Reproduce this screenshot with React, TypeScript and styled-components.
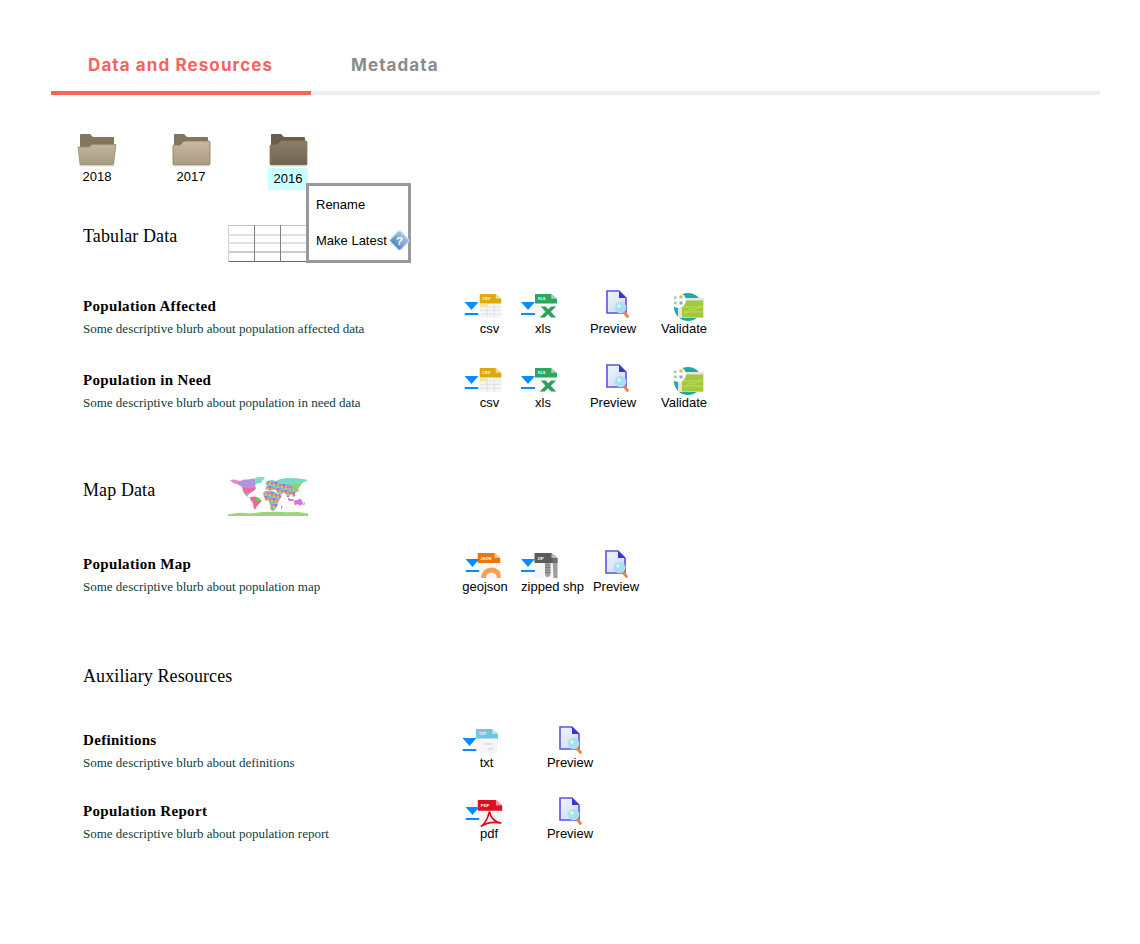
import React from 'react';
import styled, { createGlobalStyle } from 'styled-components';

const GlobalStyle = createGlobalStyle`
  html, body {
    margin: 0;
    background: #fff;
    font-family: "Liberation Sans", Arial, sans-serif;
  }
`;

type FileKind = 'csv' | 'xls' | 'json' | 'zip' | 'txt' | 'pdf';

function FolderIcon({ tone }: { tone: 'open' | 'light' | 'dark' }) {
  const front = { open: '#c2b6a2', light: '#c6b9a2', dark: '#8b7f6c' }[tone];
  const frontEnd = { open: '#a89a82', light: '#ab9c83', dark: '#6f6350' }[tone];
  const id = `folder-${tone}`;
  return (
    <svg width="40" height="34" viewBox="0 0 40 34">
      <defs>
        <linearGradient id={id} x1="0" y1="0" x2="0" y2="1">
          <stop offset="0" stopColor={front} />
          <stop offset="1" stopColor={frontEnd} />
        </linearGradient>
      </defs>
      <path d="M3 2 Q3 1 4 1 H13 L16 4 H36 Q37 4 37 5 V30 H3 Z" fill={tone === 'dark' ? '#6b5d49' : '#84755f'} />
      {tone === 'open' ? (
        <path d="M1 14 H12 L15 11.5 H39 L36.5 31 Q36.5 32 35 32 H4 Q3 32 3 31 Z" fill={`url(#${id})`} stroke="#9c8a6c" strokeWidth="0.8" />
      ) : (
        <path d="M2 13 Q2 12 3 12 H9 L13 8 H38 Q39 8 39 9 V31 Q39 32 38 32 H3 Q2 32 2 31 Z" fill={`url(#${id})`} stroke="#94794a" strokeWidth="0.8" />
      )}
      <rect x="3" y="32.4" width="35" height="1" fill="#d4d4d4" />
    </svg>
  );
}

function DownloadArrow() {
  return (
    <svg width="14" height="13" viewBox="0 0 14 13">
      <path d="M0 0 H14 L7 8 Z" fill="#0a8cff" />
      <rect x="0" y="11" width="14" height="2" fill="#0a8cff" />
    </svg>
  );
}

const fileColors: Record<FileKind, string> = {
  csv: '#dcaa0e',
  xls: '#2fa65c',
  json: '#e8780c',
  zip: '#5b5b5b',
  txt: '#74c4e0',
  pdf: '#d9111f',
};

const fileSizes: Record<FileKind, [number, number]> = {
  csv: [22, 24],
  xls: [22, 24],
  json: [23, 25],
  zip: [24, 25],
  txt: [23, 24],
  pdf: [25, 27],
};

function FileIcon({ kind }: { kind: FileKind }) {
  const color = fileColors[kind];
  const [w, h] = fileSizes[kind];
  return (
    <svg width={w} height={h} viewBox="0 0 23 25">
      <path d="M0 0 H17 L23 5 V25 H0 Z" fill="#f6f6f6" />
      <path d="M0 0 H17 L23 5 V10 H0 Z" fill={color} />
      <path d="M17 0 L23 5 H17 Z" fill="#fff" opacity="0.55" />
      <FileLabel x="3" y="6.5" fill="#fff">{kind.toUpperCase()}</FileLabel>
      {kind === 'csv' && (
        <path d="M0 13.5 H23 M0 17 H23 M0 21 H23 M8 10 V25 M15.5 10 V25" stroke="#dcdcdc" strokeWidth="0.8" fill="none" />
      )}
      {kind === 'csv' && <rect x="0" y="10" width="8" height="3.5" fill="#f8e2a0" />}
      {kind === 'xls' && (
        <path d="M6 13 H11 L14 16 L17 13 H22 L16.5 18.5 L22 24.5 H17 L13.5 21 L10 24.5 H5 L11 18.5 Z" fill="#2f9e5a" />
      )}
      {kind === 'json' && (
        <path d="M6 25 A 8 8 0 0 1 22 25" fill="none" stroke="#f4a050" strokeWidth="5" />
      )}
      {kind === 'zip' && (
        <>
          <path d="M18 5 H23 V25 H19 Z" fill="#777" opacity="0.7" />
          <path d="M10.5 10 H16 V20 Q16 24 13 24 Q10.5 24 10.5 20 Z" fill="#a0a0a0" />
          <path d="M10.5 12 H16 M10.5 14.5 H16 M10.5 17 H16 M10.5 19.5 H16" stroke="#666" strokeWidth="0.7" />
        </>
      )}
      {kind === 'txt' && (
        <>
          <text x="9" y="16.5" fontSize="3.6" fill="#c4c4c4" fontFamily="Liberation Sans, sans-serif">plain</text>
          <text x="12" y="21.5" fontSize="3.6" fill="#c4c4c4" fontFamily="Liberation Sans, sans-serif">text</text>
        </>
      )}
      {kind === 'pdf' && (
        <path d="M3 24.5 Q8.5 21 11 10.5 Q12 19 22 21.5 Q11 19 3 24.5 Z" fill="none" stroke="#d9111f" strokeWidth="1.5" />
      )}
    </svg>
  );
}

function PreviewIcon() {
  return (
    <svg width="23" height="28" viewBox="0 0 23 28">
      <defs>
        <linearGradient id="preview-page" x1="0" y1="0" x2="1" y2="1">
          <stop offset="0" stopColor="#f2f6ff" />
          <stop offset="1" stopColor="#c4d9f7" />
        </linearGradient>
      </defs>
      <path d="M1 1 H13 L20 8 V23 H1 Z" fill="url(#preview-page)" stroke="#5a50e8" strokeWidth="1.6" />
      <path d="M13 1 L20 8 H13 Z" fill="#3a33cc" />
      <path d="M17 21 L21.5 26.5" stroke="#e08a4e" strokeWidth="2.8" strokeLinecap="round" />
      <circle cx="14.5" cy="17.5" r="5.2" fill="#9fe3ef" stroke="#c7d6e4" strokeWidth="1.2" />
      <circle cx="13" cy="16" r="1.8" fill="#dff8fb" />
    </svg>
  );
}

function ValidateIcon() {
  return (
    <svg width="34" height="28" viewBox="0 0 34 28">
      <circle cx="17" cy="14" r="14" fill="#1fa9a0" />
      <rect x="7" y="5" width="26" height="20" fill="#e4e4e4" />
      <rect x="11" y="7.5" width="21" height="17" fill="#a3c93a" />
      <path d="M13 21 L19 16 L23 17 L31 12 M12 14 H32 M12 19 H32" stroke="#c9e27f" strokeWidth="0.7" fill="none" />
      <circle cx="7.5" cy="7.5" r="7.5" fill="#fff" />
      <rect x="3" y="8.5" width="2.6" height="2.6" fill="#9ccdb5" />
      <rect x="8.5" y="2.5" width="3" height="3" fill="#f0b540" />
      <rect x="3" y="3.5" width="2.6" height="2.6" fill="#9ccdb5" />
      <rect x="8.5" y="8.5" width="3" height="3" fill="#7fa9d6" />
    </svg>
  );
}

function TableThumb() {
  return (
    <svg width="80" height="37" viewBox="0 0 80 37">
      <path d="M0 0.5 H80 M0 10 H80 M0 18 H80" stroke="#c4c4c4" strokeWidth="1" />
      <path d="M0 27 H80" stroke="#9a9a9a" strokeWidth="1" />
      <path d="M0 36.5 H80" stroke="#666" strokeWidth="1" />
      <path d="M0.5 0 V37" stroke="#cfcfcf" strokeWidth="1" />
      <path d="M26.5 0 V37 M52.5 0 V37" stroke="#808080" strokeWidth="1" />
    </svg>
  );
}

const landShapes = [
  '2,4 6,3.5 12,5 16,3.5 20,3.5 25,2.5 29,4 30,7 27,9 28,12 27,14 24,16 21,18 19,21 21,21.5 19,20 17,19 15,15 14,11 10,8.5 5,7',
  '27,2 32,1 37,1 35,4 33,7 30,7',
  '22,21 27,20.5 31,22 33.5,25 31,28 29,30 27.5,33 26.5,33.5 25.5,31 25,27 22.5,24',
  '37,7 40,5 44,4 48,5 53,3 60,2 68,2.5 75,3 80,4 77,6 74,7 72,10 70,12 71,15 67,17 67.5,20 65,21 63,18 61,21 59,21 58,18 55,17 52,19 49,16.5 47,13 44,14.5 40,14 37,13 39,10',
  '35,17 38,15 42,14.5 47,16 50,18 54,20 52,23 50,26 49.5,30 46,34.5 44,35 42.5,33 42,28 40.5,25 37,24',
  '66,25 70,24 72,22.5 74,25 75,28 72,29.5 70,28 67,29',
  '60,22 62,23 65,23.5 66,24.5 62,25 60,24',
  '76,26 77,28 75,30 75.5,28',
  '13,27 14,27.5 13.5,28.5',
  '4,11 5,11.5 4.5,12.5',
  '53,30 54.5,30 54,33 53,33',
];

// broad colour areas of the map, filled under the land outline
const mapBlocks: [number, number, number, number, string][] = [
  [0, 0, 10, 9, '#e58cc8'],
  [10, 0, 20, 12, '#b592de'],
  [27, 0, 12, 8, '#7adcc9'],
  [13, 12, 16, 5, '#ee6a9a'],
  [15, 17, 8, 5, '#63cdb8'],
  [20, 20, 14, 14, '#ea6a92'],
  [28, 21, 6, 4, '#74c25a'],
  [50, 0, 30, 8, '#74dcc2'],
  [64, 8, 12, 6, '#8ed078'],
  [60, 21, 8, 5, '#e070cc'],
  [64, 22, 14, 9, '#e070d8'],
];

const mosaic = ['#e88ab0', '#8594e6', '#69d4aa', '#f0b858', '#d07ee0', '#69ccb6', '#e87a8c', '#7f7fe0', '#a8d470', '#e8a858', '#60b8e8'];
const mosaicCells: { x: number; y: number; c: string }[] = [];
for (let y = 2; y < 36; y += 2) {
  for (let x = 35; x < 74; x += 2) {
    mosaicCells.push({ x, y, c: mosaic[(x * 7 + y * 5) % mosaic.length] });
  }
}

function WorldThumb() {
  return (
    <svg width="80" height="40" viewBox="0 0 80 40">
      <defs>
        <clipPath id="land">
          {landShapes.map((pts) => <polygon key={pts} points={pts} />)}
        </clipPath>
      </defs>
      <g clipPath="url(#land)">
        {mosaicCells.map((cell) => (
          <rect key={`${cell.x}-${cell.y}`} x={cell.x} y={cell.y} width="2" height="2" fill={cell.c} />
        ))}
        {mapBlocks.map(([x, y, w, h, c]) => (
          <rect key={`${x}-${y}`} x={x} y={y} width={w} height={h} fill={c} />
        ))}
      </g>
      <polygon points="0,38.5 6,37.5 12,36.8 22,37.5 35,36 48,35.7 59,36.2 70,36 80,37.5 80,40 0,40" fill="#9ad67a" />
    </svg>
  );
}

function HelpDiamond() {
  return (
    <svg width="23" height="23" viewBox="0 0 22 22">
      <defs>
        <linearGradient id="help-fill" x1="0" y1="0" x2="0" y2="1">
          <stop offset="0" stopColor="#a9c8e8" />
          <stop offset="1" stopColor="#4f86bf" />
        </linearGradient>
      </defs>
      <rect x="4" y="4" width="14" height="14" rx="2" transform="rotate(45 11 11)" fill="url(#help-fill)" stroke="#c6d9ec" />
      <text x="11" y="15" textAnchor="middle" fontSize="11" fontWeight="700" fill="#fff" fontFamily="Liberation Sans, sans-serif">?</text>
    </svg>
  );
}

const Page = styled.div`
  width: 1140px;
  height: 944px;
  overflow: hidden;
  box-sizing: border-box;
  padding-top: 40px;
  color: #000;
`;

const TabBar = styled.div`
  display: flex;
  margin-left: 51px;
  width: 1049px;
  height: 55px;
  box-sizing: border-box;
  border-bottom: 4px solid #eeeeee;
`;

const Tab = styled.div<{ $active?: boolean }>`
  font-family: Inter, "Noto Sans", sans-serif;
  font-size: 17px;
  font-weight: 700;
  letter-spacing: 1.1px;
  line-height: 50px;
  height: 55px;
  box-sizing: border-box;
  width: ${(p) => (p.$active ? '260px' : 'auto')};
  padding-left: ${(p) => (p.$active ? 37 : 40)}px;
  color: ${(p) => (p.$active ? '#f9635b' : '#8b8b8b')};
  border-bottom: 4px solid ${(p) => (p.$active ? '#f9635b' : 'transparent')};
`;

const FolderRow = styled.div`
  display: flex;
  margin: 38px 0 35px 77px;
  height: 57px;
`;

const Folder = styled.div<{ $offset?: number }>`
  position: relative;
  width: 40px;
  margin-left: ${(p) => p.$offset ?? 0}px;
  display: flex;
  flex-direction: column;
  align-items: center;
`;

const FolderName = styled.div<{ $selected?: boolean }>`
  width: 40px;
  text-align: center;
  font-size: 13px;
  line-height: ${(p) => (p.$selected ? 22 : 16)}px;
  margin-top: ${(p) => (p.$selected ? 1 : 2)}px;
  background: ${(p) => (p.$selected ? '#ccffff' : 'transparent')};
`;

const ContextMenu = styled.div`
  position: absolute;
  left: 38px;
  top: 50px;
  z-index: 2;
  width: 105px;
  height: 80px;
  box-sizing: border-box;
  border: 3px solid #999;
  background: #fff;
  padding: 0 0 0 7px;
`;

const MenuItem = styled.div`
  display: flex;
  align-items: center;
  height: 36px;
  font-size: 13px;
  white-space: nowrap;
  svg {
    margin-left: 1px;
    flex-shrink: 0;
  }
`;

const SectionHead = styled.div<{ $height: number; $top?: number }>`
  display: grid;
  grid-template-columns: 145px 80px;
  margin-left: 83px;
  height: ${(p) => p.$height}px;
  margin-top: ${(p) => p.$top ?? 0}px;
`;

const SectionTitle = styled.h2<{ $pad: number }>`
  margin: 0;
  padding-top: ${(p) => p.$pad}px;
  font-family: "Liberation Serif", "Times New Roman", serif;
  font-size: 18px;
  font-weight: 400;
  letter-spacing: 0.1px;
  line-height: 21px;
  white-space: nowrap;
`;

const Resource = styled.div<{ $top: number }>`
  display: grid;
  grid-template-columns: 379px auto;
  margin: ${(p) => p.$top}px 0 0 83px;
  height: 46px;
`;

const ResourceText = styled.div`
  padding-top: 7px;
  font-family: "Liberation Serif", "Times New Roman", serif;
`;

const ResourceName = styled.div`
  font-size: 15px;
  font-weight: 700;
  letter-spacing: 0.32px;
  line-height: 18px;
`;

const ResourceBlurb = styled.div`
  margin-top: 6px;
  font-size: 13px;
  line-height: 16px;
  color: #0b3d3d;
`;

const Actions = styled.div`
  display: flex;
`;

const Action = styled.div<{ $width: number; $gap?: number }>`
  width: ${(p) => p.$width}px;
  margin-left: ${(p) => p.$gap ?? 0}px;
  display: flex;
  flex-direction: column;
  align-items: center;
`;

const ActionIcon = styled.div<{ $shift?: number; $lift?: number }>`
  display: flex;
  align-items: flex-end;
  height: 31px;
  transform: translate(${(p) => p.$shift ?? 0}px, ${(p) => -(p.$lift ?? 0)}px);
`;

const ArrowSlot = styled.span<{ $bottom?: number; $overlap?: number }>`
  display: flex;
  position: relative;
  z-index: 1;
  margin-bottom: ${(p) => p.$bottom ?? 3}px;
  margin-right: ${(p) => -(p.$overlap ?? 0)}px;
`;

const ActionLabel = styled.div`
  font-size: 13px;
  line-height: 16px;
  white-space: nowrap;
`;

const FileLabel = styled.text`
  font-family: "Liberation Sans", sans-serif;
  font-size: 4px;
  font-weight: 700;
`;

function Download({
  kind, label, width, shift, gap, lift = 3, bottom, overlap,
}: {
  kind: FileKind; label: string; width: number; shift: number; gap?: number; lift?: number; bottom?: number; overlap?: number;
}) {
  return (
    <Action $width={width} $gap={gap}>
      <ActionIcon $shift={shift} $lift={lift}>
        <ArrowSlot $bottom={bottom} $overlap={overlap}><DownloadArrow /></ArrowSlot>
        <FileIcon kind={kind} />
      </ActionIcon>
      <ActionLabel>{label}</ActionLabel>
    </Action>
  );
}

function Tool({
  label, width, shift, gap, lift = 1, children,
}: {
  label: string; width: number; shift: number; gap?: number; lift?: number; children: React.ReactNode;
}) {
  return (
    <Action $width={width} $gap={gap}>
      <ActionIcon $shift={shift} $lift={lift}>{children}</ActionIcon>
      <ActionLabel>{label}</ActionLabel>
    </Action>
  );
}

function TabularActions() {
  return (
    <Actions>
      <Download kind="csv" label="csv" width={55} shift={-6.5} overlap={-1} />
      <Download kind="xls" label="xls" width={52} shift={-4} />
      <Tool label="Preview" width={88} shift={4} lift={3}><PreviewIcon /></Tool>
      <Tool label="Validate" width={54} shift={4} lift={0}><ValidateIcon /></Tool>
    </Actions>
  );
}

export default function App() {
  return (
    <Page>
      <GlobalStyle />
      <TabBar>
        <Tab $active>Data and Resources</Tab>
        <Tab>Metadata</Tab>
      </TabBar>

      <FolderRow>
        <Folder>
          <FolderIcon tone="open" />
          <FolderName>2018</FolderName>
        </Folder>
        <Folder $offset={54}>
          <FolderIcon tone="light" />
          <FolderName>2017</FolderName>
        </Folder>
        <Folder $offset={57}>
          <FolderIcon tone="dark" />
          <FolderName $selected>2016</FolderName>
          <ContextMenu>
            <MenuItem>Rename</MenuItem>
            <MenuItem>
              Make Latest
              <HelpDiamond />
            </MenuItem>
          </ContextMenu>
        </Folder>
      </FolderRow>

      <SectionHead $height={37}>
        <SectionTitle $pad={1}>Tabular Data</SectionTitle>
        <TableThumb />
      </SectionHead>
      <Resource $top={28}>
        <ResourceText>
          <ResourceName>Population Affected</ResourceName>
          <ResourceBlurb>Some descriptive blurb about population affected data</ResourceBlurb>
        </ResourceText>
        <TabularActions />
      </Resource>
      <Resource $top={28}>
        <ResourceText>
          <ResourceName>Population in Need</ResourceName>
          <ResourceBlurb>Some descriptive blurb about population in need data</ResourceBlurb>
        </ResourceText>
        <TabularActions />
      </Resource>

      <SectionHead $height={40} $top={66}>
        <SectionTitle $pad={4}>Map Data</SectionTitle>
        <WorldThumb />
      </SectionHead>
      <Resource $top={32}>
        <ResourceText>
          <ResourceName>Population Map</ResourceName>
          <ResourceBlurb>Some descriptive blurb about population map</ResourceBlurb>
        </ResourceText>
        <Actions>
          <Download kind="json" label="geojson" width={46} shift={-2.5} lift={1} bottom={6} overlap={2} />
          <Download kind="zip" label="zipped shp" width={63} gap={13} shift={-13} lift={1} bottom={6} overlap={1} />
          <Tool label="Preview" width={46} gap={9} shift={0}><PreviewIcon /></Tool>
        </Actions>
      </Resource>

      <SectionHead $height={21} $top={72}>
        <SectionTitle $pad={0}>Auxiliary Resources</SectionTitle>
      </SectionHead>
      <Resource $top={37}>
        <ResourceText>
          <ResourceName>Definitions</ResourceName>
          <ResourceBlurb>Some descriptive blurb about definitions</ResourceBlurb>
        </ResourceText>
        <Actions>
          <Download kind="txt" label="txt" width={49} shift={-6.5} lift={2} bottom={2} overlap={1} />
          <Tool label="Preview" width={46} gap={36} shift={0}><PreviewIcon /></Tool>
        </Actions>
      </Resource>
      <Resource $top={25}>
        <ResourceText>
          <ResourceName>Population Report</ResourceName>
          <ResourceBlurb>Some descriptive blurb about population report</ResourceBlurb>
        </ResourceText>
        <Actions>
          <Download kind="pdf" label="pdf" width={54} shift={-5.5} lift={-1} bottom={7} overlap={2} />
          <Tool label="Preview" width={46} gap={31} shift={0}><PreviewIcon /></Tool>
        </Actions>
      </Resource>
    </Page>
  );
}
